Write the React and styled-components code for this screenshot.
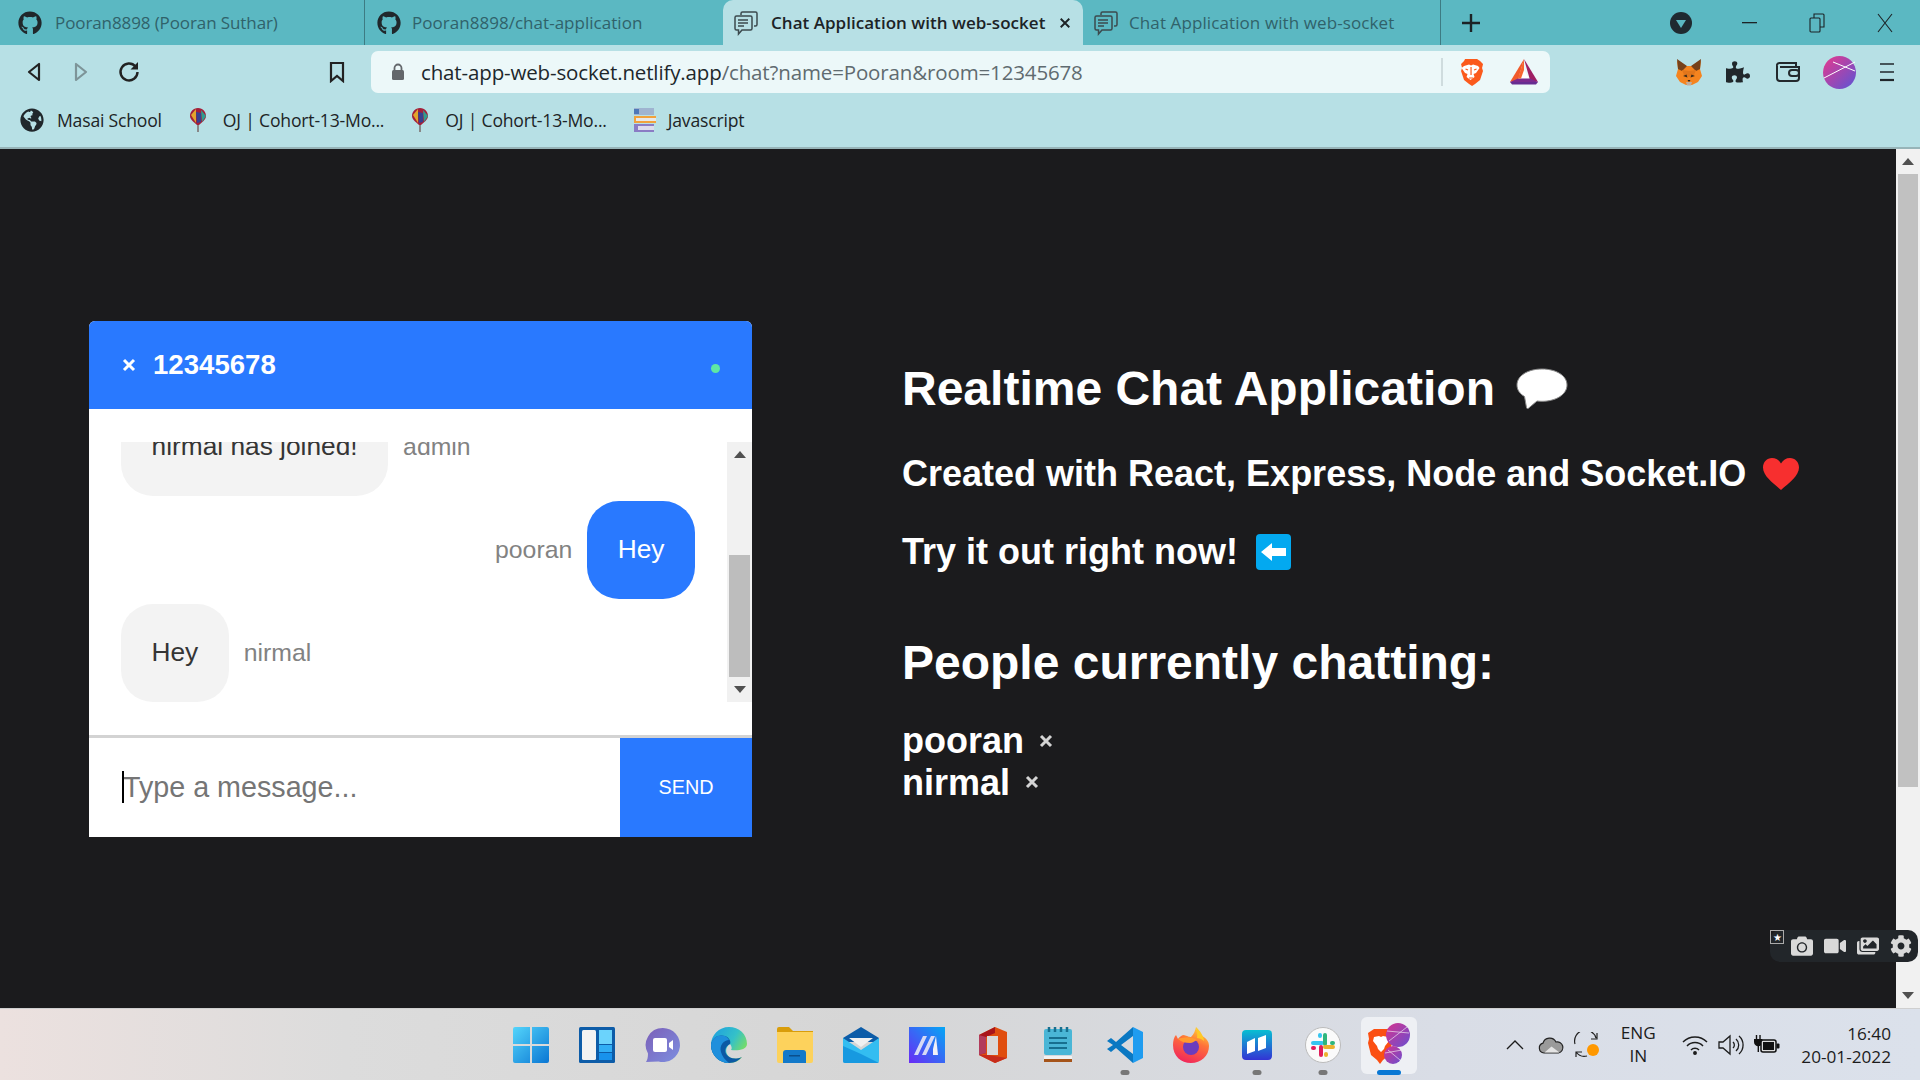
import React from 'react';
import styled, { createGlobalStyle } from 'styled-components';
import { FaGithub, FaGlobeAmericas, FaPuzzlePiece, FaCamera, FaVideo, FaImages, FaCog } from 'react-icons/fa';

const GlobalStyle = createGlobalStyle`
  html, body { margin: 0; padding: 0; overflow: hidden; }
  body { font-family: 'Liberation Sans', Arial, sans-serif; }
  * { box-sizing: border-box; }
`;

const uiFont = `'Open Sans', 'Noto Sans', sans-serif`;

const Screen = styled.div`
  width: 1920px;
  height: 1080px;
  display: flex;
  flex-direction: column;
`;

/* browser chrome */
const TabStrip = styled.div`
  height: 45px;
  background: #5bb8c2;
  display: flex;
  align-items: stretch;
`;

const Tab = styled.div`
  width: ${(p) => p.w}px;
  padding-left: ${(p) => p.pad}px;
  display: flex;
  align-items: center;
  gap: ${(p) => p.gap}px;
  font-family: ${uiFont};
  font-size: 17px;
  letter-spacing: ${(p) => p.track || 0}px;
  white-space: nowrap;
  color: ${(p) => (p.active ? '#1c2326' : '#30626a')};
  font-weight: ${(p) => (p.active ? 600 : 400)};
  background: ${(p) => (p.active ? '#b7e0e5' : 'transparent')};
  border-radius: ${(p) => (p.active ? '10px 10px 0 0' : '0')};
  position: relative;
  ${(p) => p.divider && `border-right: 1px solid #3d7b83;`}
  & > svg { flex-shrink: 0; }
`;

const TabLabel = styled.span`
  flex: 1;
  min-width: 0;
`;

const TabClose = styled.span`
  width: 16px;
  flex-shrink: 0;
  margin-right: 10px;
  display: flex;
  justify-content: center;
`;

const NewTab = styled.div`
  width: 60px;
  display: flex;
  align-items: center;
  justify-content: center;
`;

const WindowControls = styled.div`
  margin-left: auto;
  padding-right: 1px;
  display: flex;
`;

const ControlSlot = styled.div`
  width: 68px;
  display: flex;
  align-items: center;
  justify-content: center;
`;

const Toolbar = styled.div`
  height: 57px;
  background: #b7e0e5;
  display: flex;
  align-items: flex-start;
  padding: 6px 8px 0 10px;
`;

const NavButton = styled.div`
  width: 47.5px;
  height: 42px;
  display: flex;
  align-items: center;
  justify-content: center;
`;

const BookmarkButton = styled(NavButton)`
  margin: 0 10px 0 161px;
`;

const AddressBar = styled.div`
  width: 1179px;
  height: 42px;
  background: #ecf8f9;
  border-radius: 7px;
  display: flex;
  align-items: center;
  padding-left: 20px;
  font-family: ${uiFont};
  font-size: 20.5px;
  letter-spacing: -0.14px;
  color: #5f6b70;
  margin-right: 114px;
`;

const Url = styled.span`
  margin-left: 16px;
  flex: 1;
  white-space: nowrap;
`;

const Host = styled.span`
  color: #20272b;
`;

const AddressDivider = styled.span`
  width: 2px;
  height: 28px;
  background: #cfdcde;
`;

const AddressIcons = styled.div`
  display: flex;
  align-items: center;
  gap: 27px;
  padding: 0 12px 0 16px;
`;

const ExtButton = styled.div`
  width: 49.5px;
  height: 42px;
  padding-left: ${(p) => p.shift || 0}px;
  display: flex;
  align-items: center;
  justify-content: center;
`;

const BookmarksBar = styled.div`
  height: 47px;
  background: #b7e0e5;
  border-bottom: 2px solid #97b4b8;
  display: flex;
  align-items: center;
  padding: 0 0 10px 20px;
  font-family: ${uiFont};
  font-size: 17.6px;
  letter-spacing: -0.2px;
  color: #1d2426;
`;

const BookmarkItem = styled.div`
  display: flex;
  align-items: center;
  gap: ${(p) => p.gap}px;
  margin-right: ${(p) => p.after}px;
  white-space: nowrap;
`;

/* page */
const Main = styled.main`
  flex: 1;
  display: flex;
  position: relative;
  min-height: 0;
  background: #1b1b1d;
`;

const Page = styled.div`
  flex: 1;
  display: flex;
  align-items: flex-start;
  gap: 150px;
  padding: 172px 0 0 89px;
`;

const ScrollBar = styled.div`
  width: ${(p) => p.w}px;
  background: #f1f1f1;
  display: flex;
  flex-direction: column;
  align-items: center;
  flex-shrink: 0;
`;

const ScrollArrow = styled.div`
  height: 25px;
  width: 100%;
  display: flex;
  align-items: center;
  justify-content: center;
  flex-shrink: 0;
  &::before {
    content: '';
    border-left: 6px solid transparent;
    border-right: 6px solid transparent;
    ${(p) => (p.down ? 'border-top: 7px solid #505050;' : 'border-bottom: 7px solid #505050;')}
  }
`;

const ScrollTrack = styled.div`
  flex: 1;
  width: 100%;
  padding: ${(p) => p.top}px 2px 0;
`;

const ScrollThumb = styled.div`
  height: ${(p) => p.h}px;
  background: ${(p) => p.color};
`;

const ChatCard = styled.section`
  width: 663px;
  height: 516px;
  background: #fff;
  display: flex;
  flex-direction: column;
  flex-shrink: 0;
  border-radius: 6px 6px 0 0;
  overflow: hidden;
`;

const ChatHeader = styled.header`
  height: 88px;
  background: #2979ff;
  color: #fff;
  display: flex;
  align-items: center;
  padding: 0 32px 0 33px;
`;

const RoomName = styled.h3`
  margin: 0 0 0 17px;
  font-size: 27.6px;
  font-weight: 700;
  flex: 1;
`;

const OnlineDot = styled.span`
  width: 9px;
  height: 9px;
  border-radius: 50%;
  background: #5ee7a3;
  margin-top: 7px;
`;

const ChatBody = styled.div`
  flex: 1;
  display: flex;
  padding-top: 33px;
  min-height: 0;
`;

const MessageArea = styled.div`
  height: 260px;
  width: 100%;
  display: flex;
`;

const MessageList = styled.div`
  flex: 1;
  height: 100%;
  overflow: hidden;
  display: flex;
  flex-direction: column;
  justify-content: flex-end;
  gap: 4.5px;
  padding: 0 32px;
`;

const Row = styled.div`
  display: flex;
  flex-shrink: 0;
  align-items: center;
  justify-content: ${(p) => (p.own ? 'flex-end' : 'flex-start')};
  gap: 15px;
`;

const Sender = styled.span`
  font-size: 24.8px;
  color: #828282;
`;

const Bubble = styled.div`
  height: 98.5px;
  padding: 0 30.5px;
  display: flex;
  align-items: center;
  border-radius: 32px;
  font-size: 26.3px;
  white-space: nowrap;
  background: ${(p) => (p.own ? '#2979ff' : '#f3f3f3')};
  color: ${(p) => (p.own ? '#fff' : '#353535')};
`;

const ChatForm = styled.form`
  height: 102px;
  display: flex;
  border-top: 3px solid #d3d3d3;
  position: relative;
  margin: 0;
`;

const MessageInput = styled.input`
  flex: 1;
  min-width: 0;
  border: 0;
  outline: 0;
  padding: 0 0 0 34px;
  font-family: 'Liberation Sans', Arial, sans-serif;
  font-size: 28.7px;
  &::placeholder { color: #757575; opacity: 1; }
`;

const Caret = styled.span`
  position: absolute;
  left: 33px;
  top: 33px;
  width: 2px;
  height: 32px;
  background: #000;
`;

const SendButton = styled.button`
  width: 132px;
  border: 0;
  padding: 0;
  background: #2979ff;
  color: #fff;
  font-family: 'Liberation Sans', Arial, sans-serif;
  font-size: 19.8px;
`;

const Info = styled.aside`
  color: #fff;
  padding-top: 40px;
  font-weight: 700;
  white-space: nowrap;
`;

const Heading = styled.h1`
  margin: 0 0 ${(p) => p.after}px;
  font-size: ${(p) => p.size}px;
  line-height: ${(p) => p.lh}px;
  font-weight: 700;
  display: flex;
  align-items: center;
  gap: ${(p) => p.gap || 0}px;
`;

const Person = styled.div`
  font-size: 36px;
  line-height: 41.5px;
  display: flex;
  align-items: center;
  gap: 15px;
`;

/* screenshot tool overlay */
const CaptureBar = styled.div`
  position: absolute;
  left: 1770px;
  top: 781px;
  width: 148px;
  height: 32px;
  background: #22262a;
  border-radius: 10px;
  display: flex;
  align-items: center;
  padding-left: 20px;
  gap: 10px;
  color: #d9d9d9;
`;

const CaptureIcon = styled.span`
  width: 23px;
  display: flex;
  justify-content: center;
`;

const PinBox = styled.span`
  position: absolute;
  left: 0;
  top: 0;
  width: 14px;
  height: 14px;
  border: 1px solid #aaa;
  display: flex;
  align-items: center;
  justify-content: center;
  color: #fff;
  font-size: 10px;
`;

/* taskbar */
const Taskbar = styled.footer`
  height: 72px;
  position: relative;
  display: flex;
  justify-content: center;
  background: linear-gradient(90deg, #ece1df 0%, #dcdcdc 18%, #d6d6d6 45%, #d9dde6 75%, #dbe1eb 100%);
  border-top: 1px solid #cfcfcf;
`;

const TaskSlot = styled.div`
  width: 66px;
  display: flex;
  align-items: center;
  justify-content: center;
  position: relative;
  &::before {
    content: '';
    position: absolute;
    inset: 8px 5px 6px;
    border-radius: 6px;
    background: ${(p) => (p.active ? '#eef0f4' : 'transparent')};
  }
  & > svg { position: relative; }
`;

const RunDot = styled.span`
  position: absolute;
  bottom: 5px;
  left: 50%;
  transform: translateX(-50%);
  width: ${(p) => (p.active ? 24 : 9)}px;
  height: 5px;
  border-radius: 3px;
  background: ${(p) => (p.active ? '#0a78d4' : '#777')};
`;

const Tray = styled.div`
  position: absolute;
  right: 29px;
  top: 0;
  bottom: 0;
  display: flex;
  align-items: center;
  font-family: ${uiFont};
  font-size: 17.2px;
  color: #1c1c1c;
`;

const TrayIcon = styled.span`
  width: 36px;
  display: flex;
  justify-content: center;
`;

const LangBlock = styled.div`
  width: 66px;
  text-align: center;
  line-height: 22.5px;
  margin: 0 6px 0 0;
`;

const Clock = styled.div`
  text-align: right;
  line-height: 23px;
  margin-left: 16px;
`;

/* drawings */
const ChatTabIcon = () => (
  <svg width="26" height="26" viewBox="0 0 26 26" fill="none" stroke="#3c4a4e" strokeWidth="1.5">
    <path d="M8 5V3.5A1.5 1.5 0 0 1 9.5 2h13A1.5 1.5 0 0 1 24 3.5v11a1.5 1.5 0 0 1-1.5 1.5H21" />
    <path d="M3.5 6h14A1.5 1.5 0 0 1 19 7.5v11a1.5 1.5 0 0 1-1.5 1.5H9l-3.5 4v-4H3.5A1.5 1.5 0 0 1 2 18.5v-11A1.5 1.5 0 0 1 3.5 6z" />
    <path d="M5 10h10M5 13h10M5 16h6" />
  </svg>
);

const CloseX = ({ size = 14, color = '#fff', weight = 3 }) => (
  <svg width={size} height={size} viewBox="0 0 14 14" stroke={color} strokeWidth={weight} fill="none">
    <path d="M2 2l10 10M12 2L2 12" />
  </svg>
);

const BackIcon = ({ flip, color = '#222' }) => (
  <svg width="16" height="22" viewBox="0 0 16 22" fill="none" stroke={color} strokeWidth="2.2" strokeLinejoin="round" style={flip ? { transform: 'scaleX(-1)' } : undefined}>
    <path d="M13 3v16L3 11z" />
  </svg>
);

const ReloadIcon = () => (
  <svg width="22" height="22" viewBox="0 0 22 22" fill="none" stroke="#222" strokeWidth="2.4">
    <path d="M17.5 5.5A8.5 8.5 0 1 0 19.5 11" />
    <path d="M20 1v7.5h-7.5z" stroke="none" fill="#222" />
  </svg>
);

const BookmarkIcon = () => (
  <svg width="16" height="22" viewBox="0 0 16 22" fill="none" stroke="#222" strokeWidth="2.2">
    <path d="M2 2h12v18l-6-5-6 5z" />
  </svg>
);

const LockIcon = () => (
  <svg width="14" height="18" viewBox="0 0 14 18">
    <path d="M3.5 8V5a3.5 3.5 0 0 1 7 0v3" fill="none" stroke="#63676b" strokeWidth="1.8" />
    <rect x="1" y="7" width="12" height="10" rx="1.5" fill="#63676b" />
  </svg>
);

const BraveIcon = ({ size = 28 }) => (
  <svg width={size * 0.86} height={size} viewBox="0 0 24 28">
    <path d="M6 1h12l3 2 3 3-1 4 1 3-3 9-5 4-3 2-3-2-5-4-3-9 1-3-1-4 3-3z" fill="#fb5a1c" />
    <path d="M5 8l5-1.5 2 1 2-1 5 1.5 1.5 2-3.5 5-2.5 1 1 3-4 3-4-3 1-3-2.5-1-3.5-5z" fill="#fff" />
    <path d="M9 12l-2.5-1M15 12l2.5-1M10 20h4M12 9v8" stroke="#fb5a1c" strokeWidth="1.2" />
  </svg>
);

const BatIcon = () => (
  <svg width="28" height="26" viewBox="0 0 28 26">
    <path d="M14 0L0 23l8-2z" fill="#f15a2b" />
    <path d="M14 0l14 23-8-2z" fill="#9e1f63" />
    <path d="M0 23h28l-2 2.5H2z" fill="#662d91" />
    <path d="M14 11l5 8.5H9z" fill="#fff" />
    <path d="M0 23l8-3.5h12l8 3.5z" fill="#7b2a8f" />
    <path d="M14 0L8 19.5h3l3-8.5z" fill="#f7652f" />
  </svg>
);

const FoxIcon = () => (
  <svg width="26" height="28" viewBox="0 0 26 28">
    <path d="M1 3l9 5h6l9-5-1 8 2 7-4 6-6 3h-6l-6-3-4-6 2-7z" fill="#f5841f" />
    <path d="M1 1l10 7-5 5-4-2zM25 1L15 8l5 5 4-2z" fill="#76411a" />
    <path d="M6 12l7 1 7-1-2 5-5 2-5-2z" fill="#e2761b" />
    <path d="M7 18l3.5-1.5 1 3zM19 18l-3.5-1.5-1 3z" fill="#3d2a18" />
    <path d="M10 24h6l-1 3.5h-4z" fill="#c0ad9e" />
    <path d="M11.5 22h3l-1.5 2z" fill="#222" />
  </svg>
);

const WalletIcon = () => (
  <svg width="24" height="20" viewBox="0 0 24 20" fill="none" stroke="#23292d" strokeWidth="2">
    <path d="M3 1h17v4M1 4a2.5 2.5 0 0 1 2-3M1 4v12a3 3 0 0 0 3 3h16a3 3 0 0 0 3-3V5H4" />
    <rect x="13" y="8" width="10" height="6" rx="3" />
  </svg>
);

const AvatarIcon = ({ size = 33, id = 'av' }) => (
  <svg width={size} height={size} viewBox="0 0 33 33">
    <defs>
      <linearGradient id={id} x1="0" y1="0" x2="1" y2="1">
        <stop offset="0" stopColor="#e8398c" />
        <stop offset="1" stopColor="#5a55d6" />
      </linearGradient>
    </defs>
    <circle cx="16.5" cy="16.5" r="16.5" fill={`url(#${id})`} />
    <path d="M1 22L32 6M10 6l22 9" stroke="#fff" strokeWidth="1" fill="none" />
  </svg>
);

const MenuIcon = () => (
  <svg width="16" height="20" viewBox="0 0 16 20" stroke="#20272b" fill="none">
    <path d="M1 2h14" strokeWidth="1.5" />
    <path d="M1 10h14" strokeWidth="1.5" />
    <path d="M1 18h14" strokeWidth="2.2" />
  </svg>
);

const BalloonIcon = () => (
  <svg width="18" height="26" viewBox="0 0 18 26">
    <path d="M9 1C4 1 1 5 1 9c0 4 5 7 7 9h2c2-2 7-5 7-9 0-4-3-8-8-8z" fill="#a3203a" />
    <path d="M2 8l5-6v14z" fill="#e3a52c" />
    <path d="M12 3l5 6-4 6z" fill="#2f9d8f" />
    <path d="M7 5l5 1v9l-4 1z" fill="#37418f" />
    <path d="M9 18v7" stroke="#888" strokeWidth="2" />
  </svg>
);

const BooksIcon = () => (
  <svg width="24" height="26" viewBox="0 0 24 26">
    <rect x="2" y="1" width="20" height="7" fill="#9fb4d0" />
    <rect x="2" y="2" width="5" height="5" fill="#4e78b8" />
    <rect x="2" y="9" width="22" height="7" fill="#f1a23b" />
    <rect x="4" y="11" width="20" height="3" fill="#e8e8e8" />
    <rect x="2" y="17" width="20" height="8" fill="#8a7cc4" />
    <rect x="6" y="19" width="16" height="4" fill="#dcdcec" />
  </svg>
);

const BalloonEmoji = () => (
  <svg width="52" height="41" viewBox="0 0 52 41">
    <path d="M26 1C12 1 1 7.5 1 17c0 5 3 9 7.5 11.5l2 11c0 1 1 1.2 2 .7L21 33c1.5.2 3.3.3 5 .3 14 0 25-6.8 25-16.3S40 1 26 1z" fill="#fff" stroke="#8a8a8a" strokeWidth="1" />
  </svg>
);

const HeartEmoji = () => (
  <svg width="36" height="32" viewBox="0 0 36 32">
    <path d="M18 32C10 25 0 18 0 9.5 0 4 4 0 9 0c4 0 7 2 9 5.5C20 2 23 0 27 0c5 0 9 4 9 9.5C36 18 26 25 18 32z" fill="#f72f2f" />
  </svg>
);

const ArrowEmoji = () => (
  <svg width="35" height="36" viewBox="0 0 35 36">
    <rect width="35" height="36" rx="4" fill="#03a9f0" />
    <path d="M5 18l11-9v5h14v8H16v5z" fill="#fff" />
  </svg>
);

/* taskbar icons */
const WinLogo = () => (
  <svg width="36" height="36" viewBox="0 0 36 36">
    <defs>
      <linearGradient id="win" x1="0" y1="0" x2="1" y2="1">
        <stop offset="0" stopColor="#54d5fb" />
        <stop offset="1" stopColor="#0a76d3" />
      </linearGradient>
    </defs>
    <path d="M2 0h15v17H0V2a2 2 0 0 1 2-2zM19 0h15a2 2 0 0 1 2 2v15H19zM0 19h17v17H2a2 2 0 0 1-2-2zM19 19h17v15a2 2 0 0 1-2 2H19z" fill="url(#win)" />
  </svg>
);

const WidgetsIcon = () => (
  <svg width="36" height="36" viewBox="0 0 36 36">
    <rect width="36" height="36" rx="1.5" fill="#0d5ca8" />
    <rect x="3" y="3" width="14" height="30" rx="1.5" fill="#f2f2f2" />
    <rect x="20" y="3" width="13" height="14" fill="#6bd3fc" />
    <rect x="20" y="18" width="13" height="7" fill="#31aef5" />
    <rect x="20" y="26" width="13" height="7" fill="#1892ec" />
  </svg>
);

const ChatIcon = () => (
  <svg width="36" height="36" viewBox="0 0 36 36">
    <defs>
      <linearGradient id="tm" x1="0" y1="0" x2="1" y2="1">
        <stop offset="0" stopColor="#7b5fb8" />
        <stop offset="1" stopColor="#7d8fe0" />
      </linearGradient>
    </defs>
    <path d="M18 1a17 17 0 1 1-4.5 33.4L1 35c1.5-2 2-5 2-8.5A17 17 0 0 1 18 1z" fill="url(#tm)" />
    <rect x="8" y="11" width="14" height="14" rx="2" fill="#fff" />
    <path d="M24 16l4-3v10l-4-3z" fill="#fff" />
  </svg>
);

const EdgeIcon = () => (
  <svg width="36" height="36" viewBox="0 0 36 36">
    <defs>
      <linearGradient id="edge" x1="0" y1="0" x2="1" y2="0.6">
        <stop offset="0" stopColor="#1b9de2" />
        <stop offset="0.6" stopColor="#35c1c8" />
        <stop offset="1" stopColor="#7fe05a" />
      </linearGradient>
    </defs>
    <path d="M18 0C8 0 0 8 0 18c0 10 8 18 18 18 6 0 11-3 13-6-5 3-13 2-15-3-2-4 0-8 3-10 2 2 2 5 1 6 6 1 16 0 16-6C36 7 28 0 18 0z" fill="url(#edge)" />
    <path d="M0 18C1 10 8 7 14 9c5 2 6 6 5 8-5 2-6 8-3 11 2 3 8 5 15 2-3 3-7 6-13 6C8 36 0 28 0 18z" fill="#0c59a4" />
    <path d="M0 18C1 10 8 7 14 9c2 1 3 2 4 4-5 0-10 5-8 12 1 4 4 8 8 11C8 36 0 28 0 18z" fill="#1f8fdc" />
  </svg>
);

const FolderIcon = () => (
  <svg width="36" height="36" viewBox="0 0 36 36">
    <path d="M0 2a2 2 0 0 1 2-2h10l4 4h20v6H0z" fill="#d99d0a" />
    <path d="M0 5h36v29a2 2 0 0 1-2 2H2a2 2 0 0 1-2-2z" fill="#fdd25c" />
    <path d="M6 36V26a3 3 0 0 1 3-3h17a3 3 0 0 1 3 3v10z" fill="#1379c9" />
    <rect x="12" y="28" width="11" height="1.5" fill="#0b4f8c" />
  </svg>
);

const MailIcon = () => (
  <svg width="36" height="36" viewBox="0 0 36 36">
    <path d="M0 11L18 0l18 11v4H0z" fill="#0c5ca8" />
    <path d="M6 11h24l-12 9z" fill="#f1f1f1" />
    <path d="M0 11l18 12 18-12v23a2 2 0 0 1-2 2H2a2 2 0 0 1-2-2z" fill="#33bdf1" />
    <path d="M0 34V19l18 8 18 9H2a2 2 0 0 1-2-2z" fill="#1799e0" />
  </svg>
);

const AccentIcon = () => (
  <svg width="36" height="36" viewBox="0 0 36 36">
    <defs>
      <linearGradient id="ac" x1="1" y1="0" x2="0" y2="1">
        <stop offset="0" stopColor="#04a7f5" />
        <stop offset="1" stopColor="#6a2af5" />
      </linearGradient>
    </defs>
    <rect width="36" height="36" fill="url(#ac)" />
    <path d="M5 28L14 9h4L9 28zM13 28L22 9h4L17 28z" fill="#d6d9f5" />
    <path d="M24 22l3-13 2 19h-5z" fill="#f0f0f8" />
  </svg>
);

const OfficeIcon = () => (
  <svg width="28" height="36" viewBox="0 0 28 36">
    <path d="M0 8L16 0l12 5v26l-12 5L0 28z" fill="#e04e0f" />
    <path d="M0 8L16 0v6L7 10v16l-7 2z" fill="#a8151b" />
    <path d="M0 28l16 8 12-5-19-3z" fill="#c72c1c" />
    <rect x="8" y="9" width="11" height="19" fill="#d9d9d9" />
    <path d="M0 8v20l7-2V10z" fill="#b23c5c" />
  </svg>
);

const NotepadIcon = () => (
  <svg width="30" height="36" viewBox="0 0 30 36">
    <rect y="2" width="28" height="26" rx="2" fill="#4ab6d6" />
    <path d="M0 29h28v4a2 2 0 0 1-2 2H2a2 2 0 0 1-2-2z" fill="#f2f2f2" />
    <path d="M0 32h28v3H0z" fill="#a5541a" />
    <path d="M5 11h18M5 16h18M5 21h18" stroke="#176f8f" strokeWidth="2" />
    <path d="M5 0v5M11 0v5M17 0v5M23 0v5" stroke="#176f8f" strokeWidth="2.5" />
  </svg>
);

const CodeIcon = () => (
  <svg width="36" height="36" viewBox="0 0 36 36">
    <path d="M26 0l10 5v26l-10 5V0z" fill="#1f9cf0" />
    <path d="M26 0v9L14 18l12 9v9L9 21l-5 4-4-3 6-4-6-4 4-3 5 4z" fill="#0a78c2" />
  </svg>
);

const FirefoxIcon = () => (
  <svg width="36" height="36" viewBox="0 0 36 36">
    <defs>
      <linearGradient id="ff" x1="0.7" y1="0" x2="0.3" y2="1">
        <stop offset="0" stopColor="#ffd43a" />
        <stop offset="0.4" stopColor="#ff7139" />
        <stop offset="1" stopColor="#f0245c" />
      </linearGradient>
    </defs>
    <path d="M23 0c0 4 3 5 6 9 4 2 7 5 7 10 0 10-8 17-18 17S0 29 0 18c0-4 1-8 3-10l2 4c1-2 3-3 5-4 5 1 6 2 8 2 3-3 4-6 5-10z" fill="url(#ff)" />
    <circle cx="18" cy="20" r="8" fill="#6b3cbd" />
    <path d="M5 12c5-2 14-3 19 1-3 1-4 3-7 3-5 0-8-1-12-4z" fill="#ff9a2e" />
    <path d="M23 0c4 4 8 9 8 14-2-2-5-3-7-3 1-4-1-7-1-11z" fill="#ffc927" />
  </svg>
);

const MurIcon = () => (
  <svg width="30" height="30" viewBox="0 0 30 30">
    <defs>
      <linearGradient id="mu" x1="0.5" y1="0" x2="0.5" y2="1">
        <stop offset="0" stopColor="#08bfd2" />
        <stop offset="1" stopColor="#3333d4" />
      </linearGradient>
    </defs>
    <rect width="30" height="30" rx="4" fill="url(#mu)" />
    <path d="M5 12l8-4v13l-8 3zM16 8l8-3v13l-8 3z" fill="#fff" />
  </svg>
);

const SlackIcon = () => (
  <svg width="36" height="36" viewBox="0 0 36 36">
    <circle cx="18" cy="18" r="17.5" fill="#fafafa" stroke="#bbb" />
    <g strokeWidth="4" strokeLinecap="round" fill="none">
      <path d="M8 16h9M15 8v1" stroke="#36c5f0" />
      <path d="M20 8v9M28 16h-1" stroke="#2eb67d" />
      <path d="M28 20h-8M21 28v-1" stroke="#ecb22e" />
      <path d="M16 28v-8M8 21h1" stroke="#e01e5a" />
    </g>
  </svg>
);

const BraveStack = () => (
  <svg width="42" height="44" viewBox="0 0 42 44">
    <defs>
      <linearGradient id="bs" x1="0" y1="0" x2="1" y2="1">
        <stop offset="0" stopColor="#d6338f" />
        <stop offset="1" stopColor="#6a4fd0" />
      </linearGradient>
    </defs>
    <path d="M6 6h14l4 4-1 6 1 4-3 12-6 5-3 4-3-4-6-5L0 20l1-4-1-6z" fill="#fb4f12" />
    <path d="M6 14l5-1 2 1 2-1 5 1 1 4-4 5-1 3-3 3-3-3-1-3-4-5z" fill="#fff" />
    <circle cx="30" cy="12" r="12" fill="url(#bs)" />
    <circle cx="25" cy="32" r="9" fill="url(#bs)" />
    <path d="M19 8l22 2M21 18L39 4M17 30l17-3M20 27l12 10" stroke="#ece0ee" strokeWidth="0.7" fill="none" />
  </svg>
);

const CloudIcon = () => (
  <svg width="26" height="18" viewBox="0 0 26 18" stroke="#222" strokeWidth="1.2">
    <path d="M6 17a5 5 0 0 1-1-9.8A7 7 0 0 1 18 6a5.5 5.5 0 0 1 2.5 11z" fill="#9a9a9a" />
    <path d="M6.5 16.4l7-6 8 6z" fill="#e4e4e4" stroke="none" />
  </svg>
);

const SyncIcon = () => (
  <svg width="26" height="26" viewBox="0 0 26 26" fill="none" stroke="#222" strokeWidth="1.2">
    <path d="M1 12A10.5 10.5 0 0 1 22 6M23 1v6h-6M8 20H2v5M2 20a10.5 10.5 0 0 0 11 4" />
    <circle cx="19" cy="18" r="6" fill="#ff9800" stroke="none" />
  </svg>
);

const WifiIcon = () => (
  <svg width="26" height="20" viewBox="0 0 26 20" fill="none" stroke="#1c1c1c" strokeWidth="1.5">
    <path d="M1 7a17 17 0 0 1 24 0M5 11a11 11 0 0 1 16 0M9 15a5.5 5.5 0 0 1 8 0" />
    <circle cx="13" cy="18" r="1.2" fill="#1c1c1c" />
  </svg>
);

const VolumeIcon = () => (
  <svg width="26" height="22" viewBox="0 0 26 22" fill="none" stroke="#1c1c1c" strokeWidth="1.3">
    <path d="M1 8h4l7-6v18l-7-6H1z" />
    <path d="M15 8a4 4 0 0 1 0 6M18 5a8 8 0 0 1 0 12M21 2a12 12 0 0 1 0 18" />
  </svg>
);

const BatteryIcon = () => (
  <svg width="26" height="20" viewBox="0 0 26 20">
    <path d="M2.5 0v4M6 0v4M4.3 10v7" stroke="#111" strokeWidth="1.4" fill="none" />
    <path d="M0 4h8.5v3a4.2 4.2 0 0 1-8.5 0z" fill="#111" />
    <rect x="7" y="5" width="15" height="12" rx="2" fill="#ddd" stroke="#111" strokeWidth="1.5" />
    <rect x="9" y="7" width="11" height="8" fill="#111" />
    <rect x="22.5" y="8.5" width="3" height="5" rx="1" fill="#111" />
  </svg>
);

const taskApps = [
  { key: 'start', icon: <WinLogo /> },
  { key: 'widgets', icon: <WidgetsIcon /> },
  { key: 'chat', icon: <ChatIcon /> },
  { key: 'edge', icon: <EdgeIcon /> },
  { key: 'files', icon: <FolderIcon /> },
  { key: 'mail', icon: <MailIcon /> },
  { key: 'accent', icon: <AccentIcon /> },
  { key: 'office', icon: <OfficeIcon /> },
  { key: 'notepad', icon: <NotepadIcon /> },
  { key: 'code', icon: <CodeIcon />, running: true },
  { key: 'firefox', icon: <FirefoxIcon /> },
  { key: 'mur', icon: <MurIcon />, running: true },
  { key: 'slack', icon: <SlackIcon />, running: true },
  { key: 'brave', icon: <BraveStack />, active: true },
];

const App = () => {
  return (
    <Screen>
      <GlobalStyle />
      <TabStrip>
        <Tab w={365} pad={18} gap={13} track={-0.1} divider>
          <FaGithub size={24} color="#20272b" />
          <TabLabel>Pooran8898 (Pooran Suthar)</TabLabel>
        </Tab>
        <Tab w={358} pad={12} gap={11} track={0.03}>
          <FaGithub size={24} color="#20272b" />
          <TabLabel>Pooran8898/chat-application</TabLabel>
        </Tab>
        <Tab w={360} pad={10} gap={12} track={0.03} active>
          <ChatTabIcon />
          <TabLabel>Chat Application with web-socket</TabLabel>
          <TabClose><CloseX size={12} color="#1c2326" weight={2.2} /></TabClose>
        </Tab>
        <Tab w={358} pad={10} gap={10} track={0.1} divider>
          <ChatTabIcon />
          <TabLabel>Chat Application with web-socket</TabLabel>
        </Tab>
        <NewTab>
          <svg width="18" height="18" viewBox="0 0 18 18" stroke="#1c2326" strokeWidth="2.4"><path d="M9 0v18M0 9h18" /></svg>
        </NewTab>
        <WindowControls>
          <ControlSlot>
            <svg width="22" height="22" viewBox="0 0 22 22"><circle cx="11" cy="11" r="11" fill="#1f2a30" /><path d="M6 8h10l-5 8z" fill="#5bb8c2" /></svg>
          </ControlSlot>
          <ControlSlot>
            <svg width="15" height="2"><rect width="15" height="1.3" fill="#1c2326" /></svg>
          </ControlSlot>
          <ControlSlot>
            <svg width="16" height="20" viewBox="0 0 16 20" fill="none" stroke="#1c2326" strokeWidth="1.1"><rect x="1" y="5" width="10" height="14" rx="1" /><path d="M5 5V1h9a1 1 0 0 1 1 1v12h-4" /></svg>
          </ControlSlot>
          <ControlSlot>
            <svg width="16" height="20" viewBox="0 0 16 20" fill="none" stroke="#1c2326" strokeWidth="1.1"><path d="M1 1l14 18M15 1L1 19" /></svg>
          </ControlSlot>
        </WindowControls>
      </TabStrip>

      <Toolbar>
        <NavButton><BackIcon /></NavButton>
        <NavButton><BackIcon flip color="#7d9498" /></NavButton>
        <NavButton><ReloadIcon /></NavButton>
        <BookmarkButton><BookmarkIcon /></BookmarkButton>
        <AddressBar>
          <LockIcon />
          <Url><Host>chat-app-web-socket.netlify.app</Host>/chat?name=Pooran&amp;room=12345678</Url>
          <AddressDivider />
          <AddressIcons>
            <BraveIcon />
            <BatIcon />
          </AddressIcons>
        </AddressBar>
        <ExtButton><FoxIcon /></ExtButton>
        <ExtButton><FaPuzzlePiece size={24} color="#20272b" /></ExtButton>
        <ExtButton><WalletIcon /></ExtButton>
        <ExtButton shift={4}><AvatarIcon /></ExtButton>
        <ExtButton><MenuIcon /></ExtButton>
      </Toolbar>

      <BookmarksBar>
        <BookmarkItem gap={13} after={27}><FaGlobeAmericas size={24} color="#20272b" /><span>Masai School</span></BookmarkItem>
        <BookmarkItem gap={16} after={27}><BalloonIcon /><span>OJ | Cohort-13-Mo...</span></BookmarkItem>
        <BookmarkItem gap={16} after={25}><BalloonIcon /><span>OJ | Cohort-13-Mo...</span></BookmarkItem>
        <BookmarkItem gap={12} after={0}><BooksIcon /><span>Javascript</span></BookmarkItem>
      </BookmarksBar>

      <Main>
        <Page>
          <ChatCard>
            <ChatHeader>
              <CloseX size={14} />
              <RoomName>12345678</RoomName>
              <OnlineDot />
            </ChatHeader>
            <ChatBody>
              <MessageArea>
                <MessageList>
                  <Row>
                    <Bubble>nirmal has joined!</Bubble>
                    <Sender>admin</Sender>
                  </Row>
                  <Row own>
                    <Sender>pooran</Sender>
                    <Bubble own>Hey</Bubble>
                  </Row>
                  <Row>
                    <Bubble>Hey</Bubble>
                    <Sender>nirmal</Sender>
                  </Row>
                </MessageList>
                <ScrollBar w={25}>
                  <ScrollArrow />
                  <ScrollTrack top={88}><ScrollThumb h={122} color="#bdbdbd" /></ScrollTrack>
                  <ScrollArrow down />
                </ScrollBar>
              </MessageArea>
            </ChatBody>
            <ChatForm onSubmit={(e) => e.preventDefault()}>
              <MessageInput placeholder="Type a message..." readOnly />
              <Caret />
              <SendButton type="button">SEND</SendButton>
            </ChatForm>
          </ChatCard>

          <Info>
            <Heading size={48} lh={55} after={37} gap={21}>Realtime Chat Application <BalloonEmoji /></Heading>
            <Heading as="h2" size={36} lh={41} after={37} gap={17}>Created with React, Express, Node and Socket.IO <HeartEmoji /></Heading>
            <Heading as="h2" size={36} lh={41} after={63} gap={18}>Try it out right now! <ArrowEmoji /></Heading>
            <Heading size={48} lh={55} after={30}>People currently chatting:</Heading>
            <Person>pooran <CloseX size={14} color="#d4d4d4" /></Person>
            <Person>nirmal <CloseX size={14} color="#d4d4d4" /></Person>
          </Info>
        </Page>
        <ScrollBar w={24}>
          <ScrollArrow />
          <ScrollTrack top={0}><ScrollThumb h={613} color="#c1c1c1" /></ScrollTrack>
          <ScrollArrow down />
        </ScrollBar>
        <CaptureBar>
          <PinBox>★</PinBox>
          <CaptureIcon><FaCamera size={22} /></CaptureIcon>
          <CaptureIcon><FaVideo size={22} /></CaptureIcon>
          <CaptureIcon><FaImages size={22} /></CaptureIcon>
          <CaptureIcon><FaCog size={22} /></CaptureIcon>
        </CaptureBar>
      </Main>

      <Taskbar>
        {taskApps.map((app) => (
          <TaskSlot key={app.key} active={app.active}>
            {app.icon}
            {(app.running || app.active) && <RunDot active={app.active} />}
          </TaskSlot>
        ))}
        <Tray>
          <TrayIcon><svg width="18" height="10" viewBox="0 0 18 10" fill="none" stroke="#1c1c1c" strokeWidth="1.3"><path d="M1 9l8-8 8 8" /></svg></TrayIcon>
          <TrayIcon><CloudIcon /></TrayIcon>
          <TrayIcon><SyncIcon /></TrayIcon>
          <LangBlock>ENG<br />IN</LangBlock>
          <TrayIcon><WifiIcon /></TrayIcon>
          <TrayIcon><VolumeIcon /></TrayIcon>
          <TrayIcon><BatteryIcon /></TrayIcon>
          <Clock>16:40<br />20-01-2022</Clock>
        </Tray>
      </Taskbar>
    </Screen>
  );
};

export default App;
